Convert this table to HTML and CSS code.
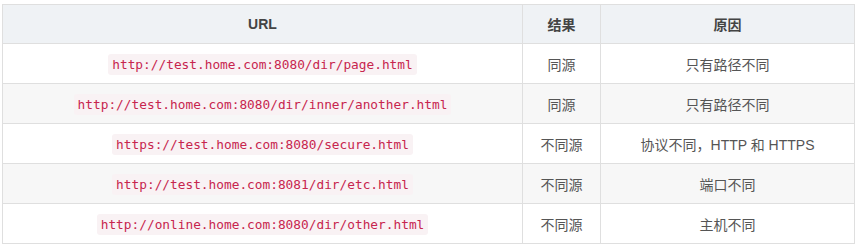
FILE: index.html
```html
<!DOCTYPE html>
<html lang="zh">
<head>
<meta charset="utf-8">
<link rel="stylesheet" href="styles.css">
</head>
<body>
<table class="tbl">
  <colgroup>
    <col class="c-url">
    <col class="c-res">
    <col class="c-why">
  </colgroup>
  <thead>
    <tr><th>URL</th><th>结果</th><th>原因</th></tr>
  </thead>
  <tbody>
    <tr><td><code>http://test.home.com:8080/dir/page.html</code></td><td>同源</td><td>只有路径不同</td></tr>
    <tr><td><code>http://test.home.com:8080/dir/inner/another.html</code></td><td>同源</td><td>只有路径不同</td></tr>
    <tr><td><code>https://test.home.com:8080/secure.html</code></td><td>不同源</td><td>协议不同，HTTP 和 HTTPS</td></tr>
    <tr><td><code>http://test.home.com:8081/dir/etc.html</code></td><td>不同源</td><td>端口不同</td></tr>
    <tr><td><code>http://online.home.com:8080/dir/other.html</code></td><td>不同源</td><td>主机不同</td></tr>
  </tbody>
</table>
</body>
</html>
```
FILE: styles.css
```css
html, body {
  margin: 0;
  background: #fff;
}
body {
  padding: 4px 2px;
  font-family: "Helvetica Neue", "Liberation Sans", Arial, "Noto Sans CJK SC", sans-serif;
  font-size: 14px;
  color: #555;
}
.tbl {
  border-collapse: collapse;
  width: 852px;
  table-layout: fixed;
}
.c-url { width: 520px; }
.c-res { width: 78px; }
.c-why { width: 254px; }
.tbl th, .tbl td {
  border: 1px solid #dfdfdf;
  text-align: center;
  padding: 0 6px;
}
.tbl th {
  height: 38px;
  background: #eff2f5;
  font-weight: bold;
  font-size: 14px;
  color: #444;
}
.tbl td {
  height: 39px;
}
.tbl tbody tr:nth-child(even) td {
  background: #f7f7f7;
}
code {
  font-family: "DejaVu Sans Mono", "Liberation Mono", monospace;
  font-size: 12.8px;
  color: #c7254e;
  background: #f9f2f4;
  padding: 3px 4px;
  border-radius: 3px;
}
```
